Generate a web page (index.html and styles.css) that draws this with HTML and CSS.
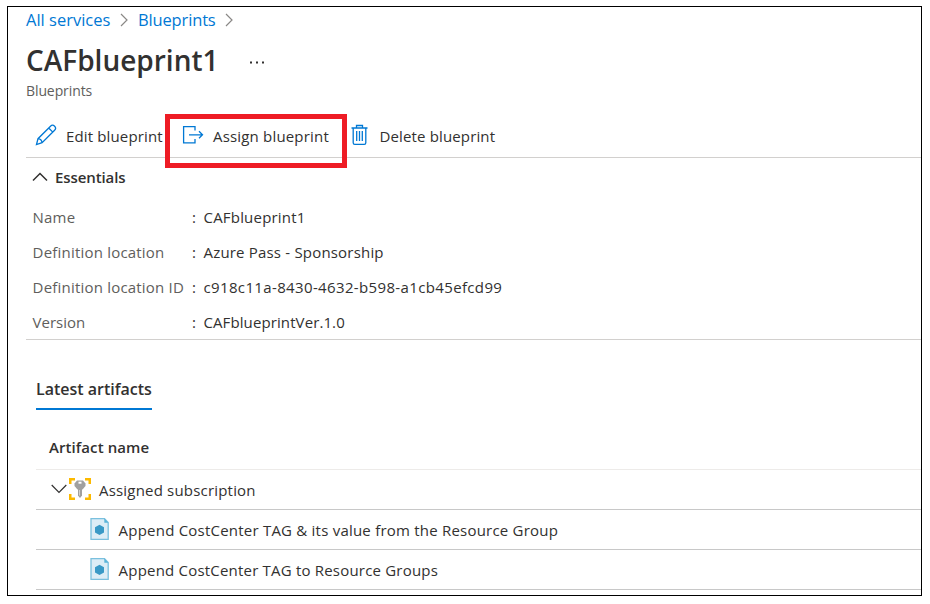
FILE: index.html
```html
<!DOCTYPE html>
<html lang="en">
<head>
<meta charset="utf-8">
<title>CAFblueprint1</title>
<link rel="stylesheet" href="styles.css">
</head>
<body>
<main class="frame">
  <nav class="breadcrumb">
    <a class="crumb-all">All services</a>
    <svg class="sep" width="8" height="14" viewBox="0 0 8 14"><path d="M1 1l6 6-6 6"/></svg>
    <a class="crumb-bp">Blueprints</a>
    <svg class="sep" width="8" height="14" viewBox="0 0 8 14"><path d="M1 1l6 6-6 6"/></svg>
  </nav>
  <header class="heading">
    <h1>CAFblueprint1</h1>
    <svg class="more" width="15" height="3" viewBox="0 0 15 3"><path d="M1 .5h2v2H1zM7 .5h2v2H7zM13 .5h2v2h-2z"/></svg>
  </header>
  <p class="subtitle">Blueprints</p>
  <div class="toolbar">
    <div class="command edit">
      <svg width="22" height="22" viewBox="0 0 22 22"><path d="M1.500 20.500l1.500-5.800L15.500 2.200a2.500 2.500 0 0 1 4.100 4.100L7.100 18.700zM13.700 4l4.100 4.100M3 14.700c2.200.2 3.700 1.500 4.100 4"/></svg>
      <span>Edit blueprint</span>
    </div>
    <div class="command assign">
      <svg width="22" height="20" viewBox="0 0 22 20"><path d="M13 5.500V1.600H1.600v16.300H13V14M7 9.800h13.500M17 6.300l3.500 3.500-3.500 3.500"/></svg>
      <span>Assign blueprint</span>
    </div>
    <div class="command delete">
      <svg width="17" height="22" viewBox="0 0 17 22"><path d="M.5 4h16M5.500 4V1.500h6V4M2.200 4v14.700q0 1.600 1.600 1.600h9.400q1.600 0 1.600-1.600V4M5.700 7v10M8.500 7v10M11.300 7v10"/></svg>
      <span>Delete blueprint</span>
    </div>
  </div>
  <section class="essentials">
    <h2><svg width="16" height="10" viewBox="0 0 16 10"><path d="M1 8.500l7-7 7 7"/></svg><span>Essentials</span></h2>
    <dl>
      <dt><span>Name</span></dt><dd><i>:</i><span class="v1">CAFblueprint1</span></dd>
      <dt><span>Definition location</span></dt><dd><i>:</i><span class="v2">Azure Pass - Sponsorship</span></dd>
      <dt><span>Definition location ID</span></dt><dd><i>:</i><span class="v3">c918c11a-8430-4632-b598-a1cb45efcd99</span></dd>
      <dt><span class="k4">Version</span></dt><dd><i>:</i><span class="v4">CAFblueprintVer.1.0</span></dd>
    </dl>
  </section>
  <section class="artifacts">
    <div class="tab">Latest artifacts</div>
    <div class="column"><span>Artifact name</span></div>
    <div class="row parent">
      <svg class="chevron" width="16" height="10" viewBox="0 0 16 10"><path d="M.7 1L8 8.300 15.300 1"/></svg>
      <svg class="key" width="22" height="22" viewBox="0 0 22 22"><path class="corner" d="M0 0h6v2.500H2.500V6H0zM16 0h6v6h-2.500V2.500H16zM0 16h2.500v3.500H6V22H0zM19.500 16H22v6h-6v-2.500h3.500z"/><path class="shaft" d="M9 10h4v7.500L11 20l-2-2.500z"/><path class="head" d="M8 2.500h6l2.500 3v2.500L13.500 11.500h-5L5.500 8V5.500z"/><path class="hole" d="M9.500 3.700h3v2h-3z"/><path class="glint" d="M10.500 12v5.500"/></svg>
      <span>Assigned subscription</span>
    </div>
    <div class="row child">
      <svg class="doc" width="19" height="22" viewBox="0 0 19 22"><path class="page" d="M1 .7h13.500l3.700 3.800v16.800H1z"/><path class="fold" d="M14.300.5l4 4.200h-4z"/><path class="hex" d="M9.500 6.700l4.500 2.600v5.200l-4.500 2.600L5 14.500V9.300z"/></svg>
      <span class="a1">Append CostCenter TAG &amp; its value from the Resource Group</span>
    </div>
    <div class="row child">
      <svg class="doc" width="19" height="22" viewBox="0 0 19 22"><path class="page" d="M1 .7h13.500l3.700 3.800v16.800H1z"/><path class="fold" d="M14.300.5l4 4.200h-4z"/><path class="hex" d="M9.500 6.700l4.500 2.600v5.200l-4.500 2.600L5 14.500V9.300z"/></svg>
      <span class="a2">Append CostCenter TAG to Resource Groups</span>
    </div>
  </section>
  <div class="highlight"></div>
</main>
</body>
</html>
```
FILE: styles.css
```css
* { box-sizing: border-box; }
body { margin: 0; background: #fff; color: #323130; font: 15px/20px "Open Sans", "Noto Sans", sans-serif; }
h1, h2, p, dl, dd { margin: 0; }
svg { fill: none; flex: none; display: block; }
span, a { white-space: nowrap; }
.frame { position: relative; width: 915px; height: 590px; margin: 6px 0 0 7px; border: 1px solid #000; padding-left: 18px; }
.breadcrumb { display: flex; align-items: center; height: 26px; font-size: 16.5px; color: #0078d4; }
.crumb-all { width: 94px; }
.crumb-bp { width: 87px; margin-left: 10px; letter-spacing: -.15px; }
.sep { stroke: #8a8886; stroke-width: 1.2; }
.heading { display: flex; align-items: center; height: 56px; }
h1 { width: 223px; padding-bottom: 2px; font-size: 28px; line-height: 40px; font-weight: 600; white-space: nowrap; }
.more { fill: #323130; margin-top: 2px; }
.subtitle { height: 21px; margin-top: -8px; font-size: 14px; line-height: 20px; letter-spacing: -.1px; color: #605e5c; }
.toolbar { display: flex; align-items: center; height: 56px; padding-top: 12px; border-bottom: 1px solid #d2d0ce; }
.command { display: flex; align-items: center; }
.command svg { margin-bottom: 2px; stroke: #0078d4; stroke-width: 1.3; }
.edit { width: 147px; padding-left: 9px; gap: 9px; letter-spacing: .14px; }
.assign { width: 178px; padding-left: 9px; gap: 9px; letter-spacing: .18px; }
.delete { gap: 11.5px; letter-spacing: .14px; }
.essentials { height: 182px; border-bottom: 1px solid #d2d0ce; }
h2 { display: flex; align-items: center; height: 38px; padding-left: 6px; gap: 7px; font-size: 15px; font-weight: 600; letter-spacing: -.1px; }
h2 svg { stroke: #323130; stroke-width: 1.5; }
dl { display: grid; grid-template-columns: 159.4px 1fr; grid-auto-rows: 35px; align-items: center; padding: 3px 0 0 6.6px; }
dt { color: #605e5c; letter-spacing: .2px; }
dd { display: flex; }
i { width: 11.5px; font-style: normal; }
.k4 { letter-spacing: 0; }
.v1 { letter-spacing: .2px; }
.v2 { letter-spacing: .19px; }
.v3 { letter-spacing: .36px; }
.v4 { letter-spacing: .1px; }
.artifacts { margin-left: 10px; padding-top: 34px; }
.tab { width: 116px; height: 36px; padding-top: 5px; border-bottom: 2px solid #0078d4; font-size: 16px; font-weight: 600; white-space: nowrap; }
.column { display: flex; align-items: center; height: 60px; padding: 14px 0 0 13px; border-bottom: 1px solid #edebe9; font-weight: 600; letter-spacing: .08px; }
.row { display: flex; align-items: center; height: 40px; border-bottom: 1px solid #c8c8c8; }
.row svg { margin-bottom: 2px; }
.parent { padding-left: 15px; letter-spacing: .19px; }
.chevron { stroke: #323130; stroke-width: 1.2; }
.row .key { margin: 0 8px 2px 2px; }
.corner { fill: #fcb900; }
.shaft, .head { fill: #a0a0a0; }
.hole { fill: #fff; }
.glint { stroke: #d0d0d0; stroke-width: 1; }
.child { padding-left: 54px; gap: 9.6px; }
.a1 { letter-spacing: .22px; }
.a2 { letter-spacing: .2px; }
.page { fill: #dcedf6; stroke: #7ac0de; stroke-width: 1.3; }
.fold { fill: #5ab4d9; }
.hex { fill: #3999c6; }
.highlight { position: absolute; left: 157px; top: 107px; width: 182px; height: 54px; border: 5px solid #ee1c25; }
```
